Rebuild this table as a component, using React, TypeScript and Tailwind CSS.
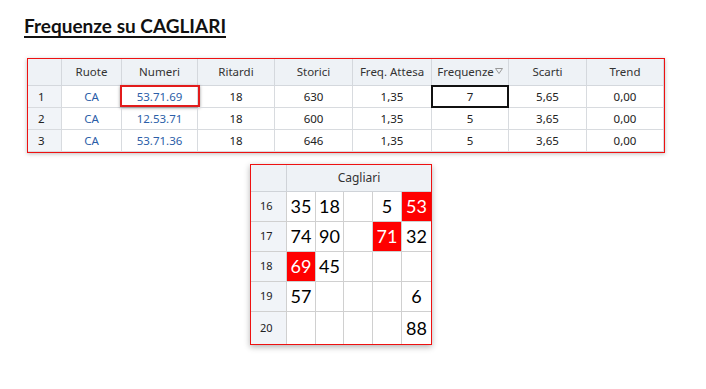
import React from "react";

const cols = ["", "Ruote", "Numeri", "Ritardi", "Storici", "Freq. Attesa", "Frequenze", "Scarti", "Trend"];
const rows = [
  ["1", "CA", "53.71.69", "18", "630", "1,35", "7", "5,65", "0,00"],
  ["2", "CA", "12.53.71", "18", "600", "1,35", "5", "3,65", "0,00"],
  ["3", "CA", "53.71.36", "18", "646", "1,35", "5", "3,65", "0,00"],
];

const grid: (number | null)[][] = [
  [35, 18, null, 5, 53],
  [74, 90, null, 71, 32],
  [69, 45, null, null, null],
  [57, null, null, null, 6],
  [null, null, null, null, 88],
];
const reds = new Set(["0-4", "1-3", "2-0"]);

export default function App() {
  return (
    <div className="w-[706px] h-[389px] bg-white relative" style={{ fontFamily: '"Noto Sans", "Open Sans", sans-serif' }}>
      <div className="pt-[14px] pl-[24px]">
        <span className="text-[19px] font-bold underline underline-offset-[3px] decoration-[1.5px] text-[#111] leading-[24px]" style={{ fontFamily: 'Lato, "Open Sans", sans-serif' }}>
          Frequenze su CAGLIARI
        </span>
      </div>

      <div className="ml-[27px] mt-[19px] w-[638px] border border-[#ee1111] shadow-[0_1px_4px_rgba(0,0,0,0.25)] bg-white">
        <div className="grid grid-cols-[34px_60px_76px_77px_78px_79px_77px_78px_77px] text-[11.5px]">
          {cols.map((c, i) => (
            <div key={i} className="h-[27px] bg-[#eef2f6] border-r border-b border-[#d4d8dd] flex items-center justify-center text-[#333]">
              {c === "Frequenze" ? (
                <span className="flex items-center">
                  Frequenze
                  <svg width="8" height="6" viewBox="0 0 8 6" className="ml-[1px] mt-[-3px]">
                    <path d="M0.5 0.5 L7.5 0.5 L4 5.5 Z" fill="none" stroke="#999" strokeWidth="1" />
                  </svg>
                </span>
              ) : (
                c
              )}
            </div>
          ))}
          {rows.map((r, ri) =>
            r.map((v, ci) => {
              const isFirst = ci === 0;
              const blue = ci === 1 || ci === 2;
              return (
                <div
                  key={ri + "-" + ci}
                  className={`relative h-[22px] border-r border-b border-[#d8dbdf] flex items-center ${
                    isFirst ? "bg-[#f1f4f8] justify-start pl-[10px] text-[#222]" : "justify-center"
                  } ${blue ? "text-[#2b5ea8]" : isFirst ? "" : "text-[#222]"}`}
                >
                  {v}
                  {ri === 0 && ci === 2 && (
                    <div className="absolute left-[-2px] top-[-1px] w-[80px] h-[22px] border-2 border-[#e21b1b] shadow-[0_1px_3px_rgba(0,0,0,0.4)]" />
                  )}
                  {ri === 0 && ci === 6 && (
                    <div className="absolute left-[-1px] top-[-1px] w-[78px] h-[23px] border-2 border-[#111]" />
                  )}
                </div>
              );
            })
          )}
        </div>
      </div>

      <div className="ml-[250px] mt-[11px] w-[182px] border border-[#ee1111] shadow-[0_2px_6px_rgba(0,0,0,0.3)] bg-white">
        <div className="flex h-[27px] border-b border-[#cfd3d8] bg-[#eef2f6]">
          <div className="w-[36px] border-r border-[#cfd3d8]" />
          <div className="flex-1 flex items-center justify-center text-[12px] text-[#333]">Cagliari</div>
        </div>
        {grid.map((row, ri) => (
          <div key={ri} className={`flex ${ri === 4 ? "h-[32px]" : "h-[30px] border-b border-[#d0d0d0]"}`}>
            <div className="w-[36px] bg-[#f1f4f8] border-r border-[#d0d0d0] flex items-center pl-[9px] text-[11px] text-[#222]">
              {16 + ri}
            </div>
            {row.map((n, ci) => {
              const red = reds.has(ri + "-" + ci);
              return (
                <div
                  key={ci}
                  className={`${ci === 1 ? "w-[28px]" : "w-[29px]"} ${ci < 4 ? "border-r border-[#d0d0d0]" : ""} flex items-center justify-center text-[18px] ${
                    red ? "bg-[#ff0000] text-white" : "text-black"
                  }`}
                  style={{ fontFamily: 'Lato, "Open Sans", sans-serif' }}
                >
                  {n ?? ""}
                </div>
              );
            })}
          </div>
        ))}
      </div>
    </div>
  );
}
